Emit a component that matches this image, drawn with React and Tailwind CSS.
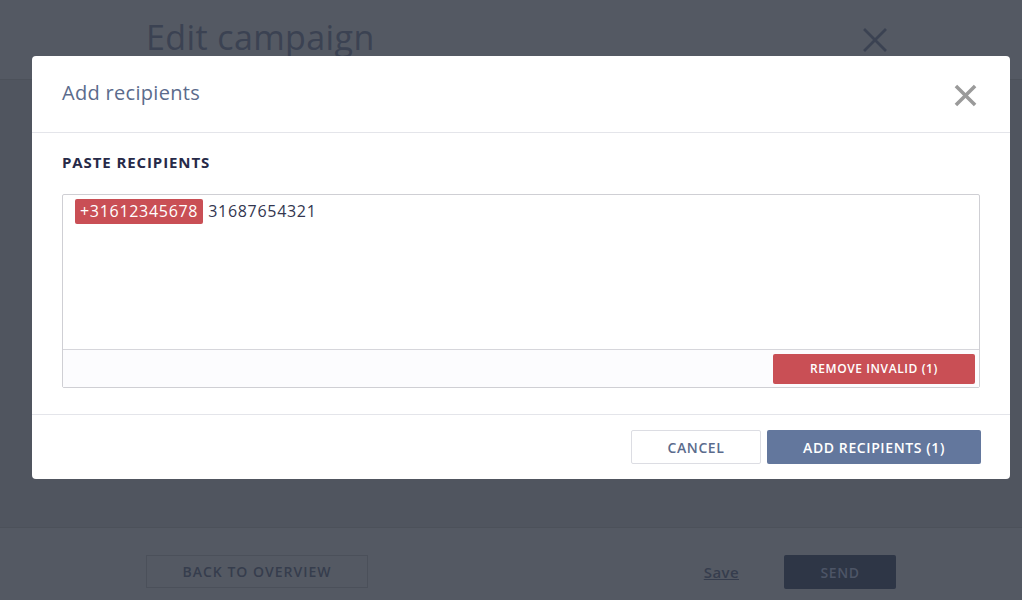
import React from "react";

const XIcon = ({ className, strokeWidth = 3 }) => (
  <svg viewBox="0 0 24 24" className={className} fill="none" stroke="currentColor" strokeWidth={strokeWidth} strokeLinecap="square">
    <path d="M4 4 L20 20 M20 4 L4 20" />
  </svg>
);

const App = () => {
  return (
    <div className="relative w-[1022px] h-[600px] overflow-hidden bg-[#50555f]" style={{ fontFamily: "'Open Sans', Lato, sans-serif" }}>
      {/* page behind overlay */}
      <div className="flex flex-col h-full">
        <div className="h-[80px] bg-[#545963] border-b border-[#4c515a] flex items-center justify-between pl-[146px] pr-[132px]">
          <div className="text-[34px] text-[#3b4252] leading-none pb-[6px] tracking-[0.4px]">Edit campaign</div>
          <XIcon className="w-[30px] h-[30px] text-[#3b4252]" strokeWidth={2.2} />
        </div>
        <div className="flex-1" />
        <div className="h-[73px] bg-[#545963] border-t border-[#4c515a] flex items-start pt-[27px] pl-[146px] pr-[126px]">
          <button className="w-[222px] h-[33px] border border-[#4b505a] text-[#363d4d] text-[14px] font-semibold tracking-[1px]">BACK TO OVERVIEW</button>
          <div className="flex-1" />
          <span className="text-[#363d4d] text-[15px] font-semibold underline mr-[45px] mt-[6px] tracking-[0.4px]">Save</span>
          <button className="w-[112px] h-[34px] rounded-[2px] bg-[#2e3646] text-[#4d5566] text-[14px] font-semibold tracking-[0.6px]">SEND</button>
        </div>
      </div>

      {/* modal */}
      <div className="absolute left-[32px] top-[56px] w-[978px] bg-white rounded-[4px]">
        <div className="h-[77px] flex items-center justify-between pl-[30px] pr-[32px] pb-[2px] border-b border-[#e4e5ea]">
          <div className="text-[20px] text-[#5b6b8c] tracking-[0.3px]">Add recipients</div>
          <XIcon className="w-[25px] h-[25px] mt-[5px] text-[#9a9a9a]" strokeWidth={3.4} />
        </div>
        <div className="px-[30px] pt-[19px] pb-[26px] border-b border-[#e4e5ea]">
          <div className="text-[15px] font-bold text-[#272a48] leading-[20px] tracking-[0.9px]">PASTE RECIPIENTS</div>
          <div className="mt-[22px] border border-[#cfcfd4] rounded-[2px]">
            <div className="h-[154px] px-[12px] pt-[4px] flex items-start gap-[5px] text-[16px]">
              <span className="bg-[#c94f55] text-white rounded-[2px] px-[5px] h-[25px] leading-[25px] tracking-[0.7px]">+31612345678</span>
              <span className="text-[#33364f] h-[25px] leading-[25px] tracking-[0.7px]">31687654321</span>
            </div>
            <div className="h-[38px] border-t border-[#d6d6db] bg-[#fcfcfe] flex items-center justify-end pr-[4px]">
              <button className="w-[202px] h-[30px] rounded-[2px] bg-[#c94f55] text-white text-[12px] font-semibold tracking-[0.6px]">REMOVE INVALID (1)</button>
            </div>
          </div>
        </div>
        <div className="h-[64px] flex items-center justify-end gap-[6px] pr-[29px]">
          <button className="w-[130px] h-[34px] border border-[#dcdde3] rounded-[2px] text-[#5b6b8c] text-[14px] font-semibold tracking-[0.6px]">CANCEL</button>
          <button className="w-[214px] h-[34px] rounded-[2px] bg-[#63779d] text-white text-[14px] font-semibold tracking-[0.6px]">ADD RECIPIENTS (1)</button>
        </div>
      </div>
    </div>
  );
};

export default App;
